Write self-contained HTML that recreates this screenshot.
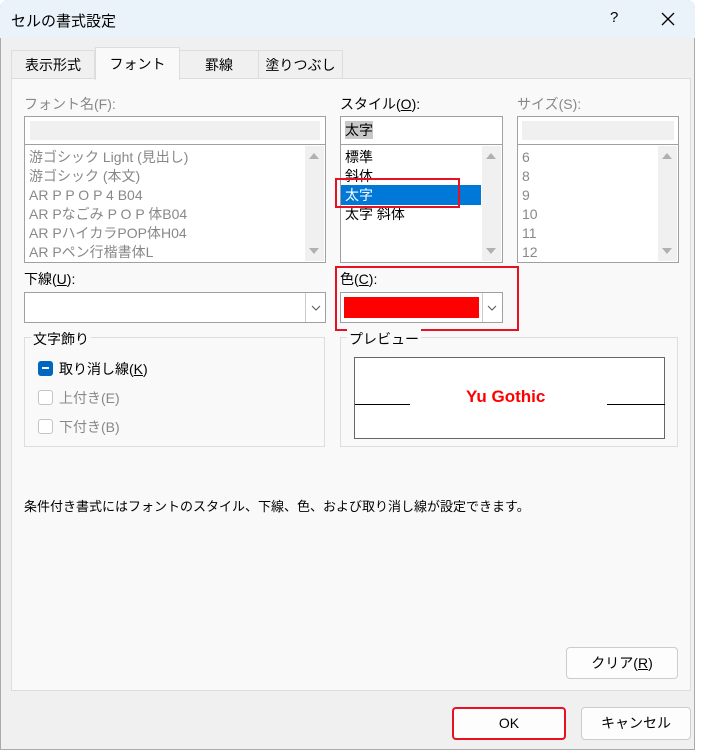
<!DOCTYPE html><html><head><meta charset="utf-8"><style>
*{box-sizing:border-box;margin:0;padding:0}
body{width:703px;height:750px;background:#fff;font-family:"Liberation Sans","Noto Sans CJK JP",sans-serif;font-size:14px;color:#000;position:relative;overflow:hidden}
.a{position:absolute}
.win{left:0;top:0;width:695px;height:750px;background:#f0f0f0;border-radius:8px 8px 0 0;overflow:hidden;box-shadow:inset 0 0 0 1px #aaa}
.tb{left:0;top:0;width:695px;height:38px;background:#eaf3fa}
.gray{color:#888}
.box{background:#fff;border:1px solid #a0a0a0}
.sb{background:#f0f0f0;width:19px}
.btn{background:#fdfdfd;border:1px solid #ccc;border-radius:4px;text-align:center;line-height:30px;font-size:14px}
.cb{width:15px;height:15px;border:1px solid #c4c4c4;border-radius:3px;background:#fff}
.grp{border:1px solid #ddd}
.lbl{background:#f9f9f9;padding:0 2px}
</style></head><body>
<div class="a win">
<div class="a tb"></div>
<div class="a" style="left:11px;top:10px;font-size:15px">セルの書式設定</div>
<div class="a" style="left:610px;top:9px;font-size:15px">?</div>
<svg class="a" style="left:661px;top:12px" width="14" height="14"><path d="M1 1L13 13M13 1L1 13" stroke="#000" stroke-width="1.3"/></svg>
<div class="a" style="left:11px;top:50px;width:84px;height:29px;background:#f0f0f0;border:1px solid #ddd;border-bottom:none;text-align:center;line-height:28px;font-size:14px">表示形式</div>
<div class="a" style="left:179px;top:50px;width:80px;height:29px;background:#f0f0f0;border:1px solid #ddd;border-bottom:none;text-align:center;line-height:28px">罫線</div>
<div class="a" style="left:258px;top:50px;width:85px;height:29px;background:#f0f0f0;border:1px solid #ddd;border-bottom:none;text-align:center;line-height:28px">塗りつぶし</div>
<div class="a" style="left:11px;top:78px;width:680px;height:613px;background:#f9f9f9;border:1px solid #ddd"></div>
<div class="a" style="left:95px;top:47px;width:85px;height:33px;background:#f9f9f9;border:1px solid #ddd;border-bottom:none;text-align:center;line-height:32px">フォント</div>
<div class="a gray" style="left:24px;top:94px">フォント名(F):</div>
<div class="a box" style="left:24px;top:116px;width:302px;height:29px"><div class="a" style="left:5px;top:4px;width:290px;height:19px;background:#f0f0f0"></div></div>
<div class="a box" style="left:24px;top:144px;width:302px;height:119px">
<div class="a gray" style="left:4px;top:3px;line-height:19px">游ゴシック Light (見出し)<br>游ゴシック (本文)<br>AR P P O P 4 B04<br>AR Pなごみ P O P 体B04<br>AR PハイカラPOP体H04<br>AR Pペン行楷書体L</div>
<div class="a sb" style="left:280px;top:1px;height:115px"></div>
<svg class="a" style="left:283px;top:7px" width="12" height="8"><path d="M1 7L6 1L11 7Z" fill="#b0b0b0"/></svg>
<svg class="a" style="left:283px;top:102px" width="12" height="8"><path d="M1 1L6 7L11 1Z" fill="#b0b0b0"/></svg>
</div>
<div class="a" style="left:340px;top:94px">スタイル(<u>O</u>):</div>
<div class="a box" style="left:340px;top:116px;width:163px;height:29px"><span class="a" style="left:4px;top:4px;background:#c8c8c8;line-height:18px">太字</span></div>
<div class="a box" style="left:340px;top:144px;width:163px;height:119px">
<div class="a" style="left:0;top:40px;width:140px;height:20px;background:#0078d7"></div>
<div class="a" style="left:4px;top:3px;line-height:19px">標準<br>斜体<br><span style="color:#fff">太字</span><br>太字 斜体</div>
<div class="a sb" style="left:141px;top:1px;height:115px"></div>
<svg class="a" style="left:144px;top:7px" width="12" height="8"><path d="M1 7L6 1L11 7Z" fill="#b0b0b0"/></svg>
<svg class="a" style="left:144px;top:102px" width="12" height="8"><path d="M1 1L6 7L11 1Z" fill="#b0b0b0"/></svg>
</div>
<div class="a" style="left:335px;top:178px;width:125px;height:30px;border:2px solid #e81123"></div>
<div class="a gray" style="left:517px;top:94px">サイズ(S):</div>
<div class="a box" style="left:517px;top:116px;width:162px;height:29px"><div class="a" style="left:4px;top:4px;width:152px;height:19px;background:#f0f0f0"></div></div>
<div class="a box" style="left:517px;top:144px;width:162px;height:119px">
<div class="a gray" style="left:4px;top:3px;line-height:19px">6<br>8<br>9<br>10<br>11<br>12</div>
<div class="a sb" style="left:140px;top:1px;height:115px"></div>
<svg class="a" style="left:143px;top:7px" width="12" height="8"><path d="M1 7L6 1L11 7Z" fill="#b0b0b0"/></svg>
<svg class="a" style="left:143px;top:102px" width="12" height="8"><path d="M1 1L6 7L11 1Z" fill="#b0b0b0"/></svg>
</div>
<div class="a" style="left:24px;top:269px">下線(<u>U</u>):</div>
<div class="a box" style="left:24px;top:292px;width:302px;height:31px"><div class="a" style="left:280px;top:0;width:21px;height:29px;border-left:1px solid #ccc"></div>
<svg class="a" style="left:286px;top:12px" width="10" height="6"><path d="M1 1L5 5L9 1" stroke="#555" fill="none"/></svg></div>
<div class="a" style="left:340px;top:269px">色(<u>C</u>):</div>
<div class="a box" style="left:340px;top:292px;width:163px;height:31px"><div class="a" style="left:3px;top:4px;width:135px;height:21px;background:#f00"></div><div class="a" style="left:141px;top:0;width:21px;height:29px;border-left:1px solid #ccc"></div>
<svg class="a" style="left:146px;top:12px" width="10" height="6"><path d="M1 1L5 5L9 1" stroke="#555" fill="none"/></svg></div>
<div class="a" style="left:335px;top:266px;width:184px;height:65px;border:2px solid #e81123"></div>
<div class="a grp" style="left:24px;top:337px;width:301px;height:110px"></div>
<div class="a lbl" style="left:31px;top:329px">文字飾り</div>
<div class="a" style="left:38px;top:361px;width:15px;height:15px;border-radius:3px;background:#0067c0"><div class="a" style="left:4px;top:6px;width:7px;height:2px;background:#fff"></div></div>
<div class="a" style="left:59px;top:359px">取り消し線(<u>K</u>)</div>
<div class="a cb" style="left:38px;top:390px"></div><div class="a gray" style="left:59px;top:388px">上付き(E)</div>
<div class="a cb" style="left:38px;top:419px"></div><div class="a gray" style="left:59px;top:417px">下付き(B)</div>
<div class="a grp" style="left:340px;top:337px;width:338px;height:110px"></div>
<div class="a lbl" style="left:347px;top:329px">プレビュー</div>
<div class="a" style="left:354px;top:357px;width:311px;height:82px;background:#fff;border:1px solid #666"></div>
<div class="a" style="left:355px;top:404px;width:55px;height:1px;background:#000"></div>
<div class="a" style="left:607px;top:404px;width:58px;height:1px;background:#000"></div>
<div class="a" style="left:466px;top:387px;color:#f00;font-weight:bold;font-size:17px">Yu Gothic</div>
<div class="a" style="left:24px;top:496px;font-size:13px">条件付き書式にはフォントのスタイル、下線、色、および取り消し線が設定できます。</div>
<div class="a btn" style="left:566px;top:647px;width:112px;height:32px">クリア(<u>R</u>)</div>
<div class="a btn" style="left:452px;top:707px;width:114px;height:33px;border:2px solid #e81123;line-height:29px">OK</div>
<div class="a btn" style="left:581px;top:707px;width:110px;height:33px">キャンセル</div>
</div>
</body></html>
